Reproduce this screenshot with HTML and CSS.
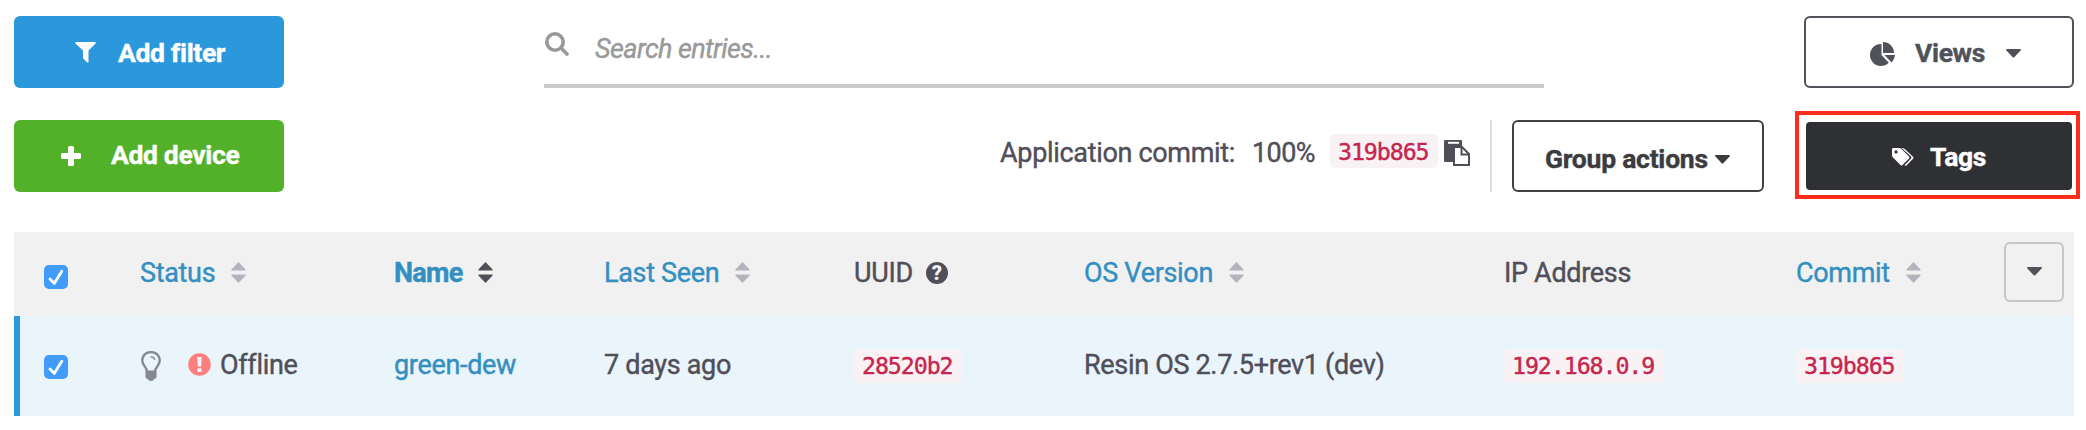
FILE: index.html
```html
<!DOCTYPE html>
<html lang="en">
<head>
<meta charset="utf-8">
<title>Devices</title>
<link rel="stylesheet" href="styles.css">
</head>
<body>
<svg class="defs" width="0" height="0">
  <symbol id="sort" viewBox="0 0 15 21"><path d="M7.5 0 14.6 7.4Q15 8.5 14 8.5H1Q0 8.5.4 7.4ZM7.5 21 14.6 13.6Q15 12.5 14 12.5H1Q0 12.5.4 13.6Z"/></symbol>
  <symbol id="caret" viewBox="0 0 15 9"><path d="M.8 0H14.2Q15.4.4 14.6 1.4L8.3 8.2Q7.5 9 6.7 8.2L.4 1.4Q-.4.4.8 0Z"/></symbol>
  <symbol id="check" viewBox="0 0 24 24"><path d="M6 14 10.2 18.4 17.8 6.2" fill="none" stroke="#fff" stroke-width="2.8" stroke-linecap="round" stroke-linejoin="round"/></symbol>
</svg>
<div class="page">
  <div class="bar">
    <button class="btn blue"><svg class="i-filter" viewBox="0 0 21 21"><path d="M1 0H20Q21.300.3 20.500 1.500L13.500 8.500V20Q13.300 21.200 12.200 20.500L8 16.300V8.500L.5 1.500Q-.3.3 1 0Z"/></svg><span>Add filter</span></button>
    <div class="search"><svg viewBox="0 0 24 24"><circle cx="10" cy="10" r="8.200"/><path d="M16 16 22 22"/></svg><span>Search entries...</span></div>
    <button class="btn views"><svg class="i-pie" viewBox="0 0 25 24"><path d="M11.500 2V13L18.800 20.700A11 11 0 1 1 11.500 2ZM13 0A11 11 0 0 1 24 11H13ZM14.500 13H25Q24.700 17.500 21.500 20.500Z"/></svg><span>Views</span><svg class="caret"><use href="#caret"/></svg></button>
  </div>
  <div class="bar second">
    <button class="btn green"><svg class="i-plus" viewBox="0 0 20 20"><path d="M8.500 0H11.500Q13 0 13 1.500V7H18.500Q20 7 20 8.500V11.500Q20 13 18.500 13H13V18.500Q13 20 11.500 20H8.500Q7 20 7 18.500V13H1.500Q0 13 0 11.500V8.500Q0 7 1.500 7H7V1.500Q7 0 8.500 0Z"/></svg><span>Add device</span></button>
    <div class="commit"><span class="label">Application commit:</span><span class="percent">100%</span><code>319b865</code><svg class="i-paste" viewBox="0 0 26 26"><path d="M1 0H17Q18 0 18 1V6H11Q9 6 9 8V22H1Q0 22 0 21V1Q0 0 1 0Z"/><path d="M4 2.800H15" stroke="#fff" stroke-width="2"/><path d="M10 7H18L25 14V25H10Z" fill="#fff" stroke="#504e59" stroke-width="2"/><path d="M17.500 7V14.500H25" fill="none" stroke="#504e59" stroke-width="2"/></svg></div>
    <button class="btn group"><span>Group actions</span><svg class="caret"><use href="#caret"/></svg></button>
    <div class="marked"><button class="tags"><svg class="i-tags" viewBox="0 0 22 18"><path fill-rule="evenodd" d="M1 0H7Q8.500 0 9.500 1L17 8.500Q18 9.500 17 10.500L10.500 17Q9.500 18 8.500 17L1 9.500Q0 8.500 0 7V1Q0 0 1 0ZM4 2.300A1.600 1.600 0 1 0 4 5.500A1.600 1.600 0 1 0 4 2.300Z"/><path d="M9.500 0Q11.500 0 12.800 1L21 8.800Q22 9.700 21 10.700L15 17Q13.800 18.300 12.600 17.200L19 10.500Q19.800 9.500 19 8.500Z"/></svg><span>Tags</span></button></div>
  </div>
  <div class="table">
    <div class="row head">
      <div class="check"><svg><use href="#check"/></svg></div>
      <div class="cell link"><span>Status</span><svg class="sort"><use href="#sort"/></svg></div>
      <div class="cell link strong"><span>Name</span><svg class="sort on"><use href="#sort"/></svg></div>
      <div class="cell link"><span>Last Seen</span><svg class="sort"><use href="#sort"/></svg></div>
      <div class="cell"><span>UUID</span><b class="help">?</b></div>
      <div class="cell link"><span>OS Version</span><svg class="sort"><use href="#sort"/></svg></div>
      <div class="cell"><span>IP Address</span></div>
      <div class="cell link"><span>Commit</span><svg class="sort"><use href="#sort"/></svg></div>
      <button class="cols"><svg class="caret"><use href="#caret"/></svg></button>
    </div>
    <div class="row item">
      <div class="check"><svg><use href="#check"/></svg></div>
      <div class="cell"><svg class="i-bulb" viewBox="0 0 20 30"><path d="M6 20C5.500 16 1.200 14.500 1.200 9A8.800 7.900 0 0 1 18.800 9C18.800 14.500 14.500 16 14 20" fill="none" stroke="#868892" stroke-width="2.400"/><path d="M9.500 6Q13 5.500 13.700 8.800" fill="none" stroke="#868892" stroke-width="1.500"/><path d="M4.500 19.500H15.500V26Q15.500 27.500 13.500 27.800Q12.500 30 10 30Q7.500 30 6.500 27.800Q4.500 27.500 4.500 26Z" fill="#868892"/></svg><svg class="i-alert" viewBox="0 0 23 23"><circle cx="11.500" cy="11.500" r="11.300" fill="#ff7f7e"/><path d="M9.300 4H13.700L13.200 13.500H9.800ZM9.500 15.300H13.500V19H9.500Z" fill="#e9f4fb"/></svg><span>Offline</span></div>
      <div class="cell link"><span>green-dew</span></div>
      <div class="cell"><span>7 days ago</span></div>
      <div class="cell"><code>28520b2</code></div>
      <div class="cell"><span>Resin OS 2.7.5+rev1 (dev)</span></div>
      <div class="cell"><code>192.168.0.9</code></div>
      <div class="cell"><code>319b865</code></div>
    </div>
  </div>
</div>
</body>
</html>
```
FILE: styles.css
```css
* { box-sizing: border-box; }
body { margin: 0; background: #fff; color: #504e59; font: 27px/32px Roboto, sans-serif; letter-spacing: -.32px; }
.defs { display: block; height: 0; }
button { font: inherit; color: inherit; letter-spacing: inherit; margin: 0; padding: 0; border: 0; background: none; }
svg { display: block; flex: none; fill: currentColor; }
span { padding-top: 1px; white-space: nowrap; -webkit-text-stroke: .4px currentColor; }
.page { padding: 16px 6px 0 14px; }
.bar { display: flex; height: 72px; }
.second { margin-top: 32px; }
.btn, .tags { display: flex; align-items: flex-start; flex: none; font-weight: 700; font-size: 26.5px; letter-spacing: -.35px; }
.btn { height: 72px; border-radius: 6px; }
.blue, .green { width: 270px; color: #fff; }
.blue { background: #2b98dc; padding: 20px 0 0 61px; }
.green { background: #52b128; padding: 18px 0 0 47px; }
.i-filter { width: 21px; height: 21px; margin: 6px 22px 0 0; }
.i-plus { width: 20px; height: 20px; margin: 8px 30px 0 0; }
.search { display: flex; width: 1000px; margin-left: 260px; padding: 16px 0 0 1px; border-bottom: 4px solid #cbcbcb; color: #999; font-style: italic; letter-spacing: -.6px; }
.search svg { width: 24px; height: 24px; margin-right: 26px; fill: none; stroke: #999; stroke-width: 3.6; stroke-linecap: round; }
.views { width: 270px; margin-left: 260px; border: 2px solid #50525a; color: #50525a; padding: 18px 0 0 64px; }
.i-pie { width: 25px; height: 24px; margin: 6px 20px 0 0; }
.caret { width: 15px; height: 9px; }
.views .caret { margin: 13px 0 0 21px; }
.commit { display: flex; flex: none; width: 508px; margin-left: 700px; padding: 16px 0 0 16px; border-right: 2px solid #dcdcdc; }
.label { width: 252px; }
.percent { width: 78px; letter-spacing: -.6px; }
code { display: block; flex: none; height: 34px; padding: 0 10px 0 8px; border-radius: 5px; background: #f8f2f4; color: #c7254e; font: 23.3px/34px "DejaVu Sans Mono", monospace; letter-spacing: -1.1px; -webkit-text-stroke: .4px currentColor; }
.commit code { margin-top: -2px; width: 108px; line-height: 35px; }
.i-paste { width: 26px; height: 26px; margin: 4px 0 0 6px; }
.group { width: 252px; margin-left: 20px; border: 2px solid #404145; color: #3b3c40; padding: 20px 0 0 31px; letter-spacing: -.25px; }
.group .caret { margin: 13px 0 0 7px; }
.marked { width: 285px; height: 88px; margin: -9px 0 0 31px; border: 4px solid #ff2b1d; padding: 7px; flex: none; }
.tags { width: 266px; height: 68px; border-radius: 4px; background: #2f3034; color: #fff; padding: 18px 0 0 86px; }
.i-tags { width: 22px; height: 18px; margin: 8px 16px 0 0; }
.table { width: 2060px; margin-top: 40px; }
.row { display: grid; grid-template-columns: 126px 254px 210px 250px 230px 420px 292px 208px 60px; }
.head { height: 84px; background: #f1f1f1; padding-top: 24px; }
.item { height: 100px; background: #e9f4fb; padding-top: 32px; box-shadow: inset 6px 0 #2b98dc; }
.check svg { width: 24px; height: 24px; margin: 9px 0 0 30px; border-radius: 5px; background: #419bf9; }
.item .check svg { margin-top: 7px; }
.cell { display: flex; }
.link { color: #338fc2; }
.strong { font-weight: 700; letter-spacing: -.75px; }
.sort { width: 15px; height: 21px; margin: 6px 0 0 16px; color: #b5b4be; }
.sort.on { color: #504e59; }
.help { width: 22px; height: 22px; margin: 6px 0 0 13px; border-radius: 50%; background: #504e59; color: #f1f1f1; font-size: 20px; font-weight: 900; line-height: 23px; text-align: center; }
.cols { display: flex; justify-content: center; width: 60px; height: 60px; margin-top: -14px; border: 2px solid #c6c6c6; border-radius: 6px; padding-top: 23px; color: #50525a; }
.item code { margin-top: 1px; }
.i-bulb { width: 20px; height: 30px; margin: 3px 27px 0 1px; }
.i-alert { width: 23px; height: 23px; margin: 5px 9px 0 0; }
```
